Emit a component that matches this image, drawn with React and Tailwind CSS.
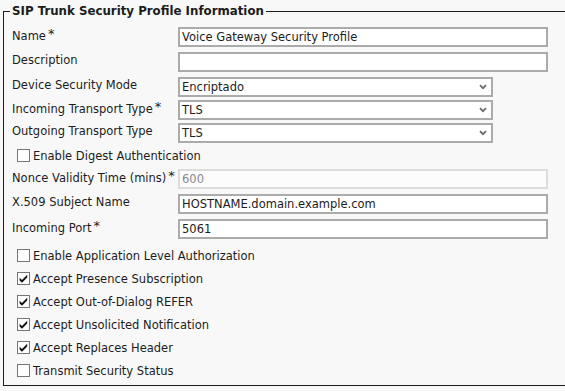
import React from "react";

function Req() {
  return <span className="ml-[2px] align-[2px] text-[13px] leading-none">*</span>;
}

function TextInput({ value = "", disabled = false }) {
  return (
    <div
      className={
        "flex h-[20px] w-[370px] items-center border-2 pl-[2px] " +
        (disabled ? "border-[#dcdcdc] bg-[#fcfcfc] text-[#8a8a8a]" : "border-[#ababab] bg-white")
      }
    >
      {value}
    </div>
  );
}

function Select({ value }) {
  return (
    <div className="flex h-[20px] w-[315px] items-center justify-between border-2 border-[#ababab] bg-white pl-[2px] pr-[4px]">
      <span>{value}</span>
      <svg width="8" height="6" viewBox="0 0 8 6">
        <path d="M1 1.2 L4 4.2 L7 1.2" fill="none" stroke="#6a6a6a" strokeWidth="1.8" />
      </svg>
    </div>
  );
}

function Box({ checked }) {
  return (
    <span className="flex h-[13px] w-[13px] shrink-0 items-center justify-center border border-[#767676] bg-[#fdfdfd]">
      {checked && (
        <svg width="11" height="11" viewBox="0 0 11 11">
          <polygon points="1.6,4.8 4,7.1 9.2,1.8 9.2,4.6 4,9.8 1.6,7.4" fill="#111" />
        </svg>
      )}
    </span>
  );
}

function CheckRow({ label, checked, mt = "" }) {
  return (
    <div className={"flex h-[23px] items-center pl-[5px] " + mt}>
      <Box checked={checked} />
      <span className="ml-[3px] pt-[1px]">{label}</span>
    </div>
  );
}

function FieldRow({ label, req, mt, children }) {
  return (
    <div className={"flex h-[20px] items-center " + mt}>
      <div className="w-[166px] shrink-0 pb-[4px]">
        {label}
        {req && <Req />}
      </div>
      {children}
    </div>
  );
}

export default function App() {
  return (
    <div className="h-[391px] w-[565px] overflow-hidden bg-[#f8f8f8] font-['DejaVu_Sans',Verdana,sans-serif] text-[11.5px] leading-[14px] text-[#1c1c1c]">
      <fieldset className="ml-[3px] mt-[4px] w-[620px] border border-[#1e1e1e] pb-[3px]">
        <legend className="ml-[6px] px-[2px] text-[11.8px] font-bold leading-[14px]">SIP Trunk Security Profile Information</legend>
        <div className="flex flex-col pl-[8px]">
          <FieldRow label="Name" req mt="mt-[9px]">
            <TextInput value="Voice Gateway Security Profile" />
          </FieldRow>
          <FieldRow label="Description" mt="mt-[5px]">
            <TextInput />
          </FieldRow>
          <FieldRow label="Device Security Mode" mt="mt-[5px]">
            <Select value="Encriptado" />
          </FieldRow>
          <FieldRow label="Incoming Transport Type" req mt="mt-[3px]">
            <Select value="TLS" />
          </FieldRow>
          <FieldRow label="Outgoing Transport Type" mt="mt-[3px]">
            <Select value="TLS" />
          </FieldRow>
          <CheckRow label="Enable Digest Authentication" mt="mt-[1px]" />
          <FieldRow label="Nonce Validity Time (mins)" req mt="mt-[2px]">
            <TextInput value="600" disabled />
          </FieldRow>
          <FieldRow label="X.509 Subject Name" mt="mt-[5px]">
            <TextInput value="HOSTNAME.domain.example.com" />
          </FieldRow>
          <FieldRow label="Incoming Port" req mt="mt-[5px]">
            <TextInput value="5061" />
          </FieldRow>
          <CheckRow label="Enable Application Level Authorization" mt="mt-[5px]" />
          <CheckRow label="Accept Presence Subscription" checked />
          <CheckRow label="Accept Out-of-Dialog REFER" checked />
          <CheckRow label="Accept Unsolicited Notification" checked />
          <CheckRow label="Accept Replaces Header" checked />
          <CheckRow label="Transmit Security Status" />
        </div>
      </fieldset>
    </div>
  );
}
